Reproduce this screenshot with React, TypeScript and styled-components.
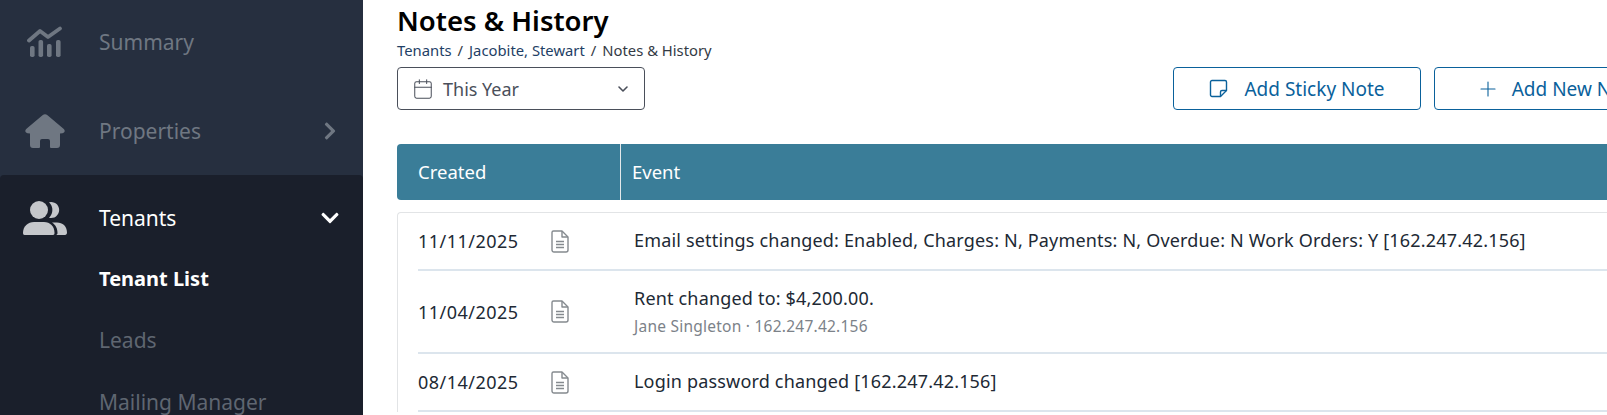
import React from 'react'
import styled, { createGlobalStyle } from 'styled-components'
import { FaChevronDown, FaChevronRight } from 'react-icons/fa'
import { Calendar, ChevronDown, Plus } from 'lucide-react'

const GlobalStyle = createGlobalStyle`
html, body {
    margin: 0;
    padding: 0;
    background: #ffffff;
    overflow: hidden;
}
* { box-sizing: border-box; }
`

const Page = styled.div`
display: flex;
width: 1607px;
height: 415px;
overflow: hidden;
font-family: "Noto Sans", "Open Sans", sans-serif;
`

const Sidebar = styled.nav`
flex: 0 0 363px;
display: flex;
flex-flow: column nowrap;
background: #262f3f;
`

const NavItem = styled.div`
display: flex;
align-items: center;
height: 88px;
padding: 0 23px 0 24px;
flex: 0 0 auto;
color: #6f7782;
&:first-child { height: 87px; padding-bottom: 3px; }
`

const NavIcon = styled.div`
width: 75px;
display: flex;
align-items: center;
color: inherit;
`

const PeopleIconBox = styled(NavIcon)`
margin-left: -1px;
width: 76px;
color: #c5c7cb;
`

const NavLabel = styled.div`
flex: 1;
font-size: 21px;
`

const ActiveGroup = styled.div`
flex: 1;
padding-top: 1px;
background: #1a1f2b;
border-radius: 4px 4px 0 0;
`

const ActiveItem = styled(NavItem)`
color: #ffffff;
`

const SubItem = styled.div<{ $active?: boolean }>`
height: 62px;
padding-left: 99px;
display: flex;
align-items: center;
font-size: ${p => p.$active ? '20px' : '21px'};
font-weight: ${p => p.$active ? 700 : 400};
color: ${p => p.$active ? '#ffffff' : '#5f6671'};
margin-top: ${p => p.$active ? '-16px' : '0'};
`

const Main = styled.main`
flex: 1;
min-width: 0;
padding: 0 0 0 34px;
overflow: hidden;
`

const Title = styled.h1`
margin: 4px 0 0;
font-size: 27.5px;
line-height: 34px;
font-weight: 600;
color: #000000;
`

const Breadcrumb = styled.div`
margin-top: 2px;
font-size: 14.8px;
line-height: 20px;
color: #1f3f66;
white-space: nowrap;
span { margin: 0 6px; color: #333a44; }
b { font-weight: 400; color: #333a44; }
`

const Toolbar = styled.div`
display: flex;
align-items: center;
margin-top: 7px;
width: 1285px;
`

const DateSelect = styled.div`
display: flex;
align-items: center;
width: 248px;
height: 43px;
padding: 0 13px 0 14px;
border: 1px solid #4a4f5a;
border-radius: 4px;
color: #4a4f5a;
font-size: 18px;
svg:first-child { margin-right: 9px; }
svg:last-child { margin-left: auto; }
`

const Actions = styled.div`
display: flex;
flex: 0 0 auto;
gap: 13px;
margin-left: auto;
`

const OutlineButton = styled.div<{ $gap: number }>`
display: flex;
align-items: center;
justify-content: center;
gap: ${p => p.$gap}px;
width: 248px;
height: 43px;
border: 1px solid #0a619b;
border-radius: 4px;
color: #0a619b;
font-size: 19px;
white-space: nowrap;
`

const TableHead = styled.div`
display: flex;
align-items: stretch;
width: 1400px;
height: 56px;
margin-top: 34px;
background: #3a7d98;
border-radius: 4px 0 0 4px;
color: #ffffff;
font-size: 18.5px;
`

const HeadCell = styled.div<{ $w?: number }>`
display: flex;
align-items: center;
width: ${p => p.$w ? p.$w + 'px' : 'auto'};
padding-left: ${p => p.$w ? 21 : 11}px;
padding-bottom: 2px;
border-right: ${p => p.$w ? '1px solid #e4e8ea' : 'none'};
`

const Card = styled.div`
width: 1400px;
margin-top: 12px;
padding: 0 0 0 20px;
border: 1px solid #e2e4e6;
border-right: none;
border-bottom: none;
border-radius: 4px 0 0 0;
`

const Row = styled.div<{ $h: number }>`
display: flex;
align-items: center;
height: ${p => p.$h}px;
border-bottom: 2px solid #dce5ed;
color: #212934;
font-size: 18px;
letter-spacing: 0.18px;
`

const DateCell = styled.div`
width: 133px;
letter-spacing: 0.47px;
`

const DocCell = styled.div`
width: 83px;
display: flex;
color: #858a8f;
`

const EventCell = styled.div`
display: flex;
flex-flow: column nowrap;
margin-top: -2px;
white-space: nowrap;
line-height: 24px;
`

const EventMeta = styled.div`
margin-top: 7px;
font-size: 15.5px;
line-height: 18px;
letter-spacing: 0.24px;
color: #7c8289;
`

const ChartIcon = () => (
    <svg width="40" height="32" viewBox="0 0 40 32" fill="currentColor">
        <path d="M5 14.5 L16 5 L24 11 L36 2.5" fill="none" stroke="currentColor" strokeWidth="3.8" strokeLinecap="round" strokeLinejoin="round" />
        <rect x="6" y="20" width="4.6" height="11" rx="1.8" />
        <rect x="14.5" y="14" width="4.6" height="17" rx="1.8" />
        <rect x="23" y="18" width="4.6" height="13" rx="1.8" />
        <rect x="32" y="14" width="4.6" height="17" rx="1.8" />
    </svg>
)

const HouseIcon = () => (
    <svg width="41" height="34" viewBox="-1 0 41 34" fill="currentColor">
        <path d="M17.5 1.2 Q20 -0.5 22.5 1.2 L38.8 15 Q40.5 17 39 18.5 Q38 19.5 35 19.5 V31 Q35 34 32 34 H26 Q25 34 25 33 V27 Q25 25 23 25 H17 Q15 25 15 27 V33 Q15 34 14 34 H8 Q5 34 5 31 V19.5 Q2 19.5 1 18.5 Q-0.5 17 1.2 15 Z" />
    </svg>
)

const PeopleIcon = () => (
    <svg width="44" height="34" viewBox="0 0 44 34" fill="currentColor">
        <circle cx="16" cy="9" r="9" />
        <path d="M1.5 34 C0.5 34 0 33.2 0 32 C0 25 5 21 11 21 H21 C27 21 31.5 25 31.5 32 C31.5 33.2 31 34 30 34 Z" />
        <path d="M26 1.3 A8 8 0 1 1 26 16.7 A10.5 10.5 0 0 0 26 1.3 Z" />
        <path d="M33 34 H42 C43.3 34 44 33 44 31.5 C44 25 39.5 21.5 34 21.5 H29 C33 24 34.5 28 34.5 32 C34.5 33 34 33.7 33 34 Z" />
    </svg>
)

const StickyIcon = () => (
    <svg width="19" height="19" viewBox="0 0 19 19" fill="none" stroke="currentColor" strokeWidth="1.4" strokeLinejoin="round">
        <path d="M3 1.5 H16 A1.5 1.5 0 0 1 17.5 3 V11.5 L11.5 17.5 H3 A1.5 1.5 0 0 1 1.5 16 V3 A1.5 1.5 0 0 1 3 1.5 Z" />
        <path d="M17.5 11.5 H13 A1.5 1.5 0 0 0 11.5 13 V17.5" />
    </svg>
)

const DocIcon = () => (
    <svg width="18" height="23" viewBox="0 0 18 23" fill="none" stroke="currentColor" strokeWidth="1.4" strokeLinejoin="round">
        <path d="M2.5 1 H11 L17 7 V20 A2 2 0 0 1 15 22 H3 A2 2 0 0 1 1 20 V2.5 A1.5 1.5 0 0 1 2.5 1 Z" />
        <path d="M11 1 V7 H17" />
        <path d="M5 11.5 H13 M5 14.5 H13 M5 17.5 H13" />
    </svg>
)

interface HistoryRow {
    date: string;
    text: string;
    meta?: string;
    height: number;
}

const rows: HistoryRow[] = [
    { date: '11/11/2025', text: 'Email settings changed: Enabled, Charges: N, Payments: N, Overdue: N Work Orders: Y [162.247.42.156]', height: 58 },
    { date: '11/04/2025', text: 'Rent changed to: $4,200.00.', meta: 'Jane Singleton · 162.247.42.156', height: 83 },
    { date: '08/14/2025', text: 'Login password changed [162.247.42.156]', height: 58 },
]

export default function App() {
    return (
        <Page>
            <GlobalStyle />
            <Sidebar>
                <NavItem>
                    <NavIcon><ChartIcon /></NavIcon>
                    <NavLabel>Summary</NavLabel>
                </NavItem>
                <NavItem>
                    <NavIcon><HouseIcon /></NavIcon>
                    <NavLabel>Properties</NavLabel>
                    <FaChevronRight size={20} />
                </NavItem>
                <ActiveGroup>
                    <ActiveItem>
                        <PeopleIconBox><PeopleIcon /></PeopleIconBox>
                        <NavLabel>Tenants</NavLabel>
                        <FaChevronDown size={20} />
                    </ActiveItem>
                    <SubItem $active>Tenant List</SubItem>
                    <SubItem>Leads</SubItem>
                    <SubItem>Mailing Manager</SubItem>
                </ActiveGroup>
            </Sidebar>
            <Main>
                <Title>Notes &amp; History</Title>
                <Breadcrumb>Tenants<span>/</span>Jacobite, Stewart<span>/</span><b>Notes &amp; History</b></Breadcrumb>
                <Toolbar>
                    <DateSelect>
                        <Calendar size={22} strokeWidth={1.1} />
                        This Year
                        <ChevronDown size={16} strokeWidth={2.4} />
                    </DateSelect>
                    <Actions>
                        <OutlineButton $gap={16}><StickyIcon />Add Sticky Note</OutlineButton>
                        <OutlineButton $gap={12}><Plus size={24} strokeWidth={1.1} />Add New Note</OutlineButton>
                    </Actions>
                </Toolbar>
                <TableHead>
                    <HeadCell $w={224}>Created</HeadCell>
                    <HeadCell>Event</HeadCell>
                </TableHead>
                <Card>
                    {rows.map(r => (
                        <Row key={r.date} $h={r.height}>
                            <DateCell>{r.date}</DateCell>
                            <DocCell><DocIcon /></DocCell>
                            <EventCell>
                                {r.text}
                                {r.meta && <EventMeta>{r.meta}</EventMeta>}
                            </EventCell>
                        </Row>
                    ))}
                </Card>
            </Main>
        </Page>
    )
}
